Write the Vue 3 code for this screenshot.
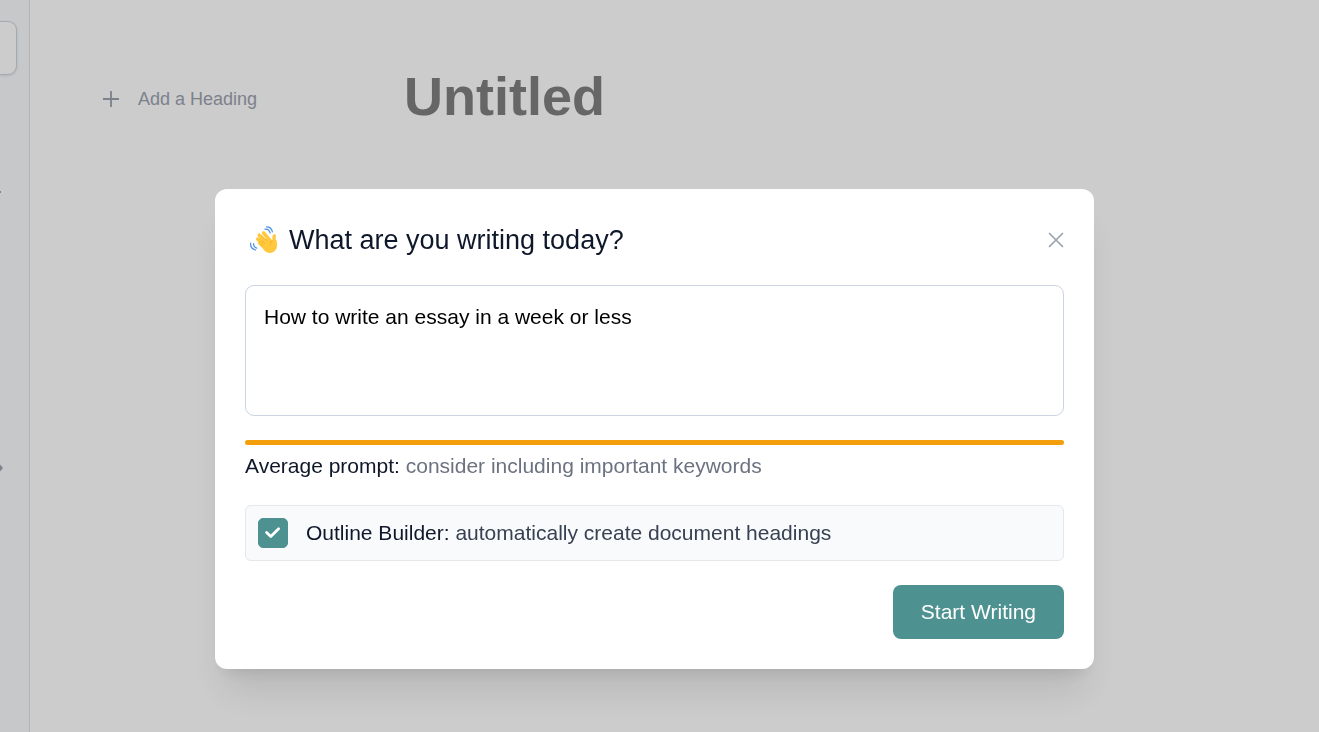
<template>
  <div class="page">
    <aside class="sidebar">
      <div class="side-card"></div>
      <svg class="side-mark" viewBox="0 0 2 6" aria-hidden="true">
        <path d="M0 2h1v2H0z" fill="#9ca3af" />
      </svg>
      <svg class="side-arrow" viewBox="0 0 4 8" aria-hidden="true">
        <path d="M0 0.5L3 4L0 7.5z" fill="#9ca3af" />
      </svg>
    </aside>
    <nav class="outline">
      <button type="button" class="add-heading">
        <svg viewBox="0 0 18 18" aria-hidden="true">
          <path d="M9 1v16M1 9h16" stroke="currentColor" stroke-width="1.8" />
        </svg>
        <span>Add a Heading</span>
      </button>
    </nav>
    <main class="document">
      <h1>Untitled</h1>
    </main>
  </div>

  <div v-if="isOpen" class="overlay">
    <form class="modal" role="dialog" aria-modal="true" aria-labelledby="modal-title" @submit.prevent="isOpen = false">
      <header class="modal-header">
        <svg class="wave" viewBox="0 0 30 30" aria-hidden="true">
          <g fill="none" stroke="#4f8fe8" stroke-width="1.2" stroke-linecap="round">
            <path d="M16 4.2c2.6-.2 4.5 1.3 5.2 3.8" />
            <path d="M17.5 1.9c3.1 0 5.3 2 5.9 5" />
            <path d="M4.6 18.6c-.1 2.2 1.1 3.9 3.2 4.5" />
            <path d="M1.7 18c-.4 3.4 1.7 6.2 5 7" />
          </g>
          <g fill="none" stroke="#ffc83d" stroke-linecap="round">
            <path d="M10.6 18.1l6.2 6" stroke-width="3.4" />
            <path d="M8.7 14.2l9.5 8.2" stroke-width="3.5" />
            <path d="M10.2 10.2l9.8 9.8" stroke-width="3.6" />
            <path d="M14.6 7.8l7.6 9.5" stroke-width="3.6" />
            <path d="M25.3 10.8c-.8 2.4-.4 5 .8 8.5" stroke-width="3.2" />
          </g>
          <path d="M11 18L19.5 11.4L23.6 15.8L27.3 15C28.7 19.8 28.2 23.8 25.4 26.3C22.4 28.9 17.8 28.2 15.2 25.2z" fill="#ffc83d" />
          <path d="M12.6 10.2l4.9 5.3M10.2 13.3l5.4 5.1M10.3 16.8l3.7 3.4M23.6 15.4c-1.6.8-2.5 2.4-2.1 4.3" fill="none" stroke="#eda51f" stroke-width=".6" stroke-linecap="round" />
        </svg>
        <h2 id="modal-title">What are you writing today?</h2>
        <button type="button" class="close" aria-label="Close" @click="isOpen = false">
          <svg viewBox="0 0 16 16" aria-hidden="true">
            <path d="M1.5 1.5l13 13M14.5 1.5l-13 13" stroke="currentColor" stroke-width="1.7" stroke-linecap="round" />
          </svg>
        </button>
      </header>

      <textarea v-model="prompt" aria-label="What are you writing today?" spellcheck="false"></textarea>

      <div class="strength-bar"></div>
      <p class="strength">Average prompt: <span>consider including important keywords</span></p>

      <label class="option" for="outline-builder">
        <input id="outline-builder" v-model="outlineBuilder" type="checkbox">
        <span class="option-text">Outline Builder: <span>automatically create document headings</span></span>
      </label>

      <footer class="modal-footer">
        <button type="submit" class="start">Start Writing</button>
      </footer>
    </form>
  </div>
</template>

<script setup>
import { ref } from 'vue';

const isOpen = ref(true);
const prompt = ref('How to write an essay in a week or less');
const outlineBuilder = ref(true);
</script>

<style>
body {
  margin: 0;
  background-color: #fff;
}
</style>

<style scoped>
.page,
.modal,
button,
textarea {
  font-family: "Liberation Sans", Arial, sans-serif;
}

.page {
  display: flex;
  min-height: 100vh;
}

.sidebar {
  box-sizing: border-box;
  width: 30px;
  flex-shrink: 0;
  display: flex;
  flex-direction: column;
  align-items: flex-start;
  padding-top: 21px;
  background-color: #f8fafc;
  border-right: 1px solid #dfe2e7;
}

.side-card {
  box-sizing: border-box;
  width: 17px;
  height: 54px;
  background-color: #fff;
  border: 1px solid #cbd5e1;
  border-left: none;
  border-radius: 0 9px 9px 0;
  box-shadow: 0 1px 3px rgba(0, 0, 0, 0.1);
}

.side-mark {
  width: 2px;
  height: 6px;
  margin-top: 114px;
}

.side-arrow {
  width: 4px;
  height: 8px;
  margin-top: 269px;
}

.outline {
  width: 302px;
  flex-shrink: 0;
  padding: 84px 0 0 72px;
}

.add-heading {
  display: flex;
  align-items: center;
  gap: 18px;
  padding: 0;
  border: none;
  background: none;
  color: #9ca3af;
  font-size: 18px;
  line-height: 30px;
  cursor: pointer;
}

.add-heading svg {
  width: 18px;
  height: 18px;
}

.document {
  flex: 1;
  padding-top: 66px;
}

.document h1 {
  margin: 0;
  color: #808080;
  font-size: 54px;
  line-height: 60px;
}

.overlay {
  position: fixed;
  inset: 0;
  display: flex;
  align-items: flex-start;
  justify-content: center;
  padding: 189px 10px 0 0;
  background-color: rgba(0, 0, 0, 0.2);
}

.modal {
  box-sizing: border-box;
  width: 100%;
  max-width: 879px;
  padding: 30px;
  background-color: #fff;
  border-radius: 12px;
  box-shadow: 0 30px 38px -8px rgba(0, 0, 0, 0.1), 0 12px 15px -9px rgba(0, 0, 0, 0.1);
  color: #0f172a;
  font-size: 21px;
}

.modal-header {
  display: flex;
  align-items: center;
  height: 42px;
  margin-bottom: 24px;
  padding-left: 4px;
}

.wave {
  width: 30px;
  height: 30px;
  margin-right: 10px;
}

.modal-header h2 {
  flex: 1;
  margin: 0;
  font-size: 27px;
  font-weight: normal;
  line-height: 42px;
}

.close {
  display: flex;
  padding: 0;
  border: none;
  background: none;
  color: #9ca3af;
  cursor: pointer;
}

.close svg {
  width: 16px;
  height: 16px;
}

textarea {
  box-sizing: border-box;
  display: block;
  width: 100%;
  height: 131px;
  padding: 16px 18px;
  border: 1px solid #cbd5e1;
  border-radius: 9px;
  outline: none;
  resize: none;
  color: #000;
  font-size: 21px;
  line-height: 30px;
}

.strength-bar {
  height: 5px;
  margin-top: 24px;
  border-radius: 3px;
  background-color: #f59e0b;
}

.strength {
  margin: 6px 0 24px;
  line-height: 30px;
}

.strength span {
  color: #6b7280;
}

.option {
  display: flex;
  align-items: center;
  gap: 18px;
  padding: 12px;
  border: 1px solid #e5e7eb;
  border-radius: 6px;
  background-color: #f8fafc;
  line-height: 30px;
  cursor: pointer;
}

.option-text span {
  color: #374151;
}

.option input {
  appearance: none;
  width: 30px;
  height: 30px;
  margin: 0;
  border: 1px solid #4d9291;
  border-radius: 5px;
  background-color: #fff;
  cursor: pointer;
}

.option input:checked {
  background: #4d9291 url("data:image/svg+xml,%3Csvg xmlns='http://www.w3.org/2000/svg' viewBox='0 0 30 30'%3E%3Cpath d='M8.6 14.4l4.2 4L20.6 10.8' fill='none' stroke='white' stroke-width='2.8' stroke-linecap='round' stroke-linejoin='round'/%3E%3C/svg%3E") center / 30px 30px no-repeat;
}

.modal-footer {
  display: flex;
  justify-content: flex-end;
  margin-top: 24px;
}

.start {
  padding: 12px 28px;
  border: none;
  border-radius: 8px;
  background-color: #4d9291;
  color: #fff;
  font-size: 21px;
  line-height: 30px;
  cursor: pointer;
}
</style>
